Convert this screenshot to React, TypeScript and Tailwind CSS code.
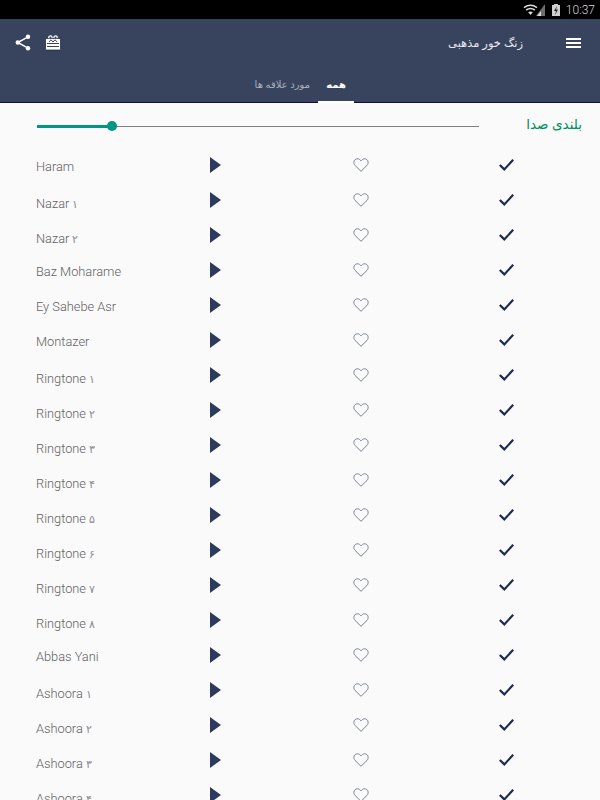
const songs = [
  ["Haram"],
  ["Nazar", "۱"],
  ["Nazar", "۲"],
  ["Baz Moharame"],
  ["Ey Sahebe Asr"],
  ["Montazer"],
  ["Ringtone", "۱"],
  ["Ringtone", "۲"],
  ["Ringtone", "۳"],
  ["Ringtone", "۴"],
  ["Ringtone", "۵"],
  ["Ringtone", "۶"],
  ["Ringtone", "۷"],
  ["Ringtone", "۸"],
  ["Abbas Yani"],
  ["Ashoora", "۱"],
  ["Ashoora", "۲"],
  ["Ashoora", "۳"],
  ["Ashoora", "۴"],
];

function StatusBar() {
  return (
    <div className="h-[19px] bg-black flex items-center justify-end pr-[5px]">
      <svg width="23" height="12" viewBox="0 0 23 12" className="mr-[6px]">
        <path d="M1 3.6 Q7.5 -1 14 3.6" fill="none" stroke="#dcdcdc" strokeWidth="1.6" />
        <path d="M3.2 6 Q7.5 3 11.8 6" fill="none" stroke="#dcdcdc" strokeWidth="1.6" />
        <path d="M5.2 8.2 Q7.5 6.8 9.8 8.2 L7.5 11 Z" fill="#dcdcdc" />
        <path d="M13 12 L22 12 L22 0 Z" fill="#6e6e6e" />
        <path d="M14 12 L18 12 L18 7 Z" fill="#d8d8d8" />
      </svg>
      <svg width="8" height="12" viewBox="0 0 8 12" className="mr-[6px]">
        <rect x="0" y="1" width="8" height="11" fill="#cfcfcf" />
        <rect x="2" y="0" width="4" height="1" fill="#cfcfcf" />
        <path d="M5 2 L2 7 L4 7 L3 11 L6 5.5 L4 5.5 Z" fill="#222" />
      </svg>
      <span className="text-[12px] leading-none font-light text-[#d8d8d8] font-['Roboto',sans-serif]">10:37</span>
    </div>
  );
}

function ShareIcon() {
  return (
    <svg width="16" height="17" viewBox="0 0 16 17" fill="#fff" stroke="#fff">
      <circle cx="13" cy="2.8" r="2.2" stroke="none" />
      <circle cx="2.8" cy="8.5" r="2.2" stroke="none" />
      <circle cx="13" cy="14.2" r="2.2" stroke="none" />
      <path d="M13 2.8 L2.8 8.5 L13 14.2" fill="none" strokeWidth="1.5" />
    </svg>
  );
}

function GiftIcon() {
  return (
    <svg width="16" height="16" viewBox="0 0 16 16">
      <circle cx="5.4" cy="2.6" r="1.7" fill="none" stroke="#fff" strokeWidth="1.3" />
      <circle cx="10.6" cy="2.6" r="1.7" fill="none" stroke="#fff" strokeWidth="1.3" />
      <rect x="0.5" y="3.5" width="15" height="11.5" rx="0.5" fill="#fff" stroke="#141f44" strokeWidth="0.7" />
      <path d="M4 7 L6 4.8 L8 7 L10 4.8 L12 7" fill="none" stroke="#38445e" strokeWidth="1" />
      <rect x="2" y="8" width="12" height="1" fill="#38445e" />
      <rect x="2" y="11" width="12" height="1" fill="#38445e" />
    </svg>
  );
}

function MenuIcon() {
  return (
    <div className="flex flex-col gap-[2px] w-[15px]">
      <div className="h-[2px] bg-white" />
      <div className="h-[2px] bg-white" />
      <div className="h-[2px] bg-white" />
    </div>
  );
}

function Row({ name, digit }: { name: string; digit?: string }) {
  return (
    <div className="h-[35px] flex items-center">
      <span
        className={`w-[174px] ml-[36px] text-[12.8px] font-light text-[#616161] font-['Roboto',sans-serif] whitespace-nowrap ${digit ? "pt-[8px]" : "pt-[4px]"}`}
      >
        {name}
        {digit && (
          <span className="ml-[3px] text-[10.5px] text-[#8a8a8a] font-['DejaVu_Sans',sans-serif]">{digit}</span>
        )}
      </span>
      <svg width="11" height="16" viewBox="0 0 11 16" className="shrink-0">
        <path d="M0 0 L11 8 L0 16 Z" fill="#2d3a5c" />
      </svg>
      <svg width="16" height="14" viewBox="0 0 16 14" className="ml-[132px] mt-px shrink-0">
        <path
          d="M8 13.3 L2 7.4 C-0.2 5 0.9 0.8 4.4 0.8 C6 0.8 7.2 1.7 8 2.8 C8.8 1.7 10 0.8 11.6 0.8 C15.1 0.8 16.2 5 14 7.4 Z"
          fill="none"
          stroke="#7a8092"
          strokeWidth="1"
        />
      </svg>
      <svg width="15" height="12" viewBox="0 0 15 12" className="ml-[130px] mt-px shrink-0">
        <path d="M0.8 6 L5.3 10.4 L14.2 0.8" fill="none" stroke="#1d2b50" strokeWidth="2.2" />
      </svg>
    </div>
  );
}

export default function App() {
  return (
    <div className="w-[600px] h-[800px] overflow-hidden bg-[#fafafa] font-['Noto_Sans','DejaVu_Sans',sans-serif]">
      <StatusBar />
      <div className="h-[84px] bg-[#38445e] border-b border-[#0b1345] flex flex-col">
        <div className="h-[47px] flex items-center justify-between pl-[15px] pr-[19px]">
          <div className="flex items-center gap-[14px]">
            <ShareIcon />
            <GiftIcon />
          </div>
          <div className="flex items-center gap-[43px]">
            <span dir="rtl" className="text-[11.5px] text-[#e8eaef]">زنگ خور مذهبی</span>
            <MenuIcon />
          </div>
        </div>
        <div className="flex-1 flex justify-end pr-[246px]">
          <span dir="rtl" className="mr-[8px] pt-[11px] text-[10px] text-[#aab0bd]">مورد علاقه ها</span>
          <span dir="rtl" className="relative w-[36px] -mb-px text-center pt-[11px] text-[10px] font-bold text-white border-b-2 border-white">همه</span>
        </div>
      </div>
      <div className="h-[44px] flex items-center pl-[37px] pr-[18px]">
        <div className="w-[442px] h-px mt-[3px] bg-[#808080] relative">
          <div className="absolute left-0 top-[-1px] h-[3px] w-[75px] bg-[#009680]" />
          <div className="absolute left-[70px] top-[-5px] w-[10px] h-[10px] rounded-full bg-[#009680]" />
        </div>
        <span dir="rtl" className="ml-auto -mt-px text-[13.5px] text-[#008f5e]">بلندی صدا</span>
      </div>
      <div>
        {songs.map(([name, digit]) => (
          <Row key={name + (digit ?? "")} name={name} digit={digit} />
        ))}
      </div>
    </div>
  );
}
